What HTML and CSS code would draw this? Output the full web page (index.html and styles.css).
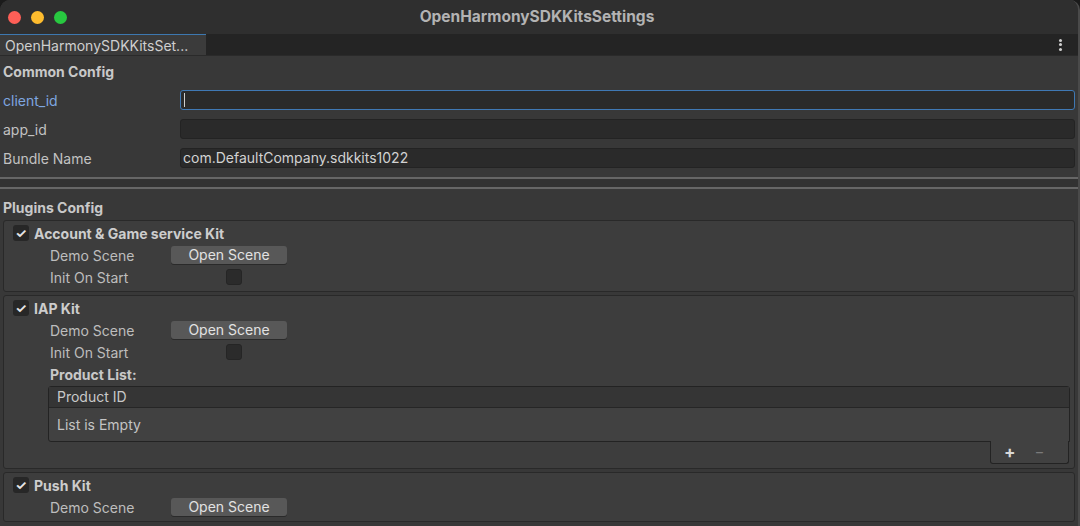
FILE: index.html
```html
<!DOCTYPE html>
<html>
<head>
<meta charset="utf-8">
<link rel="stylesheet" href="styles.css">
</head>
<body>
<div class="window">
  <div class="titlebar">
    <div class="lights">
      <span class="light red"></span>
      <span class="light yellow"></span>
      <span class="light green"></span>
    </div>
    <div class="title">OpenHarmonySDKKitsSettings</div>
  </div>
  <div class="tabbar">
    <div class="tab">OpenHarmonySDKKitsSet...</div>
    <div class="kebab"><span></span><span></span><span></span></div>
  </div>
  <div class="content">
    <div class="section-title">Common Config</div>
    <div class="fields">
      <div class="field-row">
        <div class="label focus">client_id</div>
        <div class="input focused"><span class="caret"></span></div>
      </div>
      <div class="field-row">
        <div class="label">app_id</div>
        <div class="input"></div>
      </div>
      <div class="field-row">
        <div class="label">Bundle Name</div>
        <div class="input">com.DefaultCompany.sdkkits1022</div>
      </div>
    </div>
    <div class="separator"></div>
    <div class="section-title plugins">Plugins Config</div>

    <div class="kit first">
      <div class="kit-head"><span class="check">&#10003;</span><span class="kit-name">Account &amp; Game service Kit</span></div>
      <div class="prop"><span class="prop-label">Demo Scene</span><span class="btn">Open Scene</span></div>
      <div class="prop"><span class="prop-label">Init On Start</span><span class="box-check"></span></div>
    </div>

    <div class="kit">
      <div class="kit-head"><span class="check">&#10003;</span><span class="kit-name">IAP Kit</span></div>
      <div class="prop"><span class="prop-label">Demo Scene</span><span class="btn">Open Scene</span></div>
      <div class="prop"><span class="prop-label">Init On Start</span><span class="box-check"></span></div>
      <div class="prop"><span class="prop-label bold">Product List:</span></div>
      <div class="list">
        <div class="list-head">Product ID</div>
        <div class="list-body">List is Empty</div>
      </div>
      <div class="list-foot"><span class="plus">+</span><span class="minus">&#8722;</span></div>
    </div>

    <div class="kit">
      <div class="kit-head"><span class="check">&#10003;</span><span class="kit-name">Push Kit</span></div>
      <div class="prop"><span class="prop-label">Demo Scene</span><span class="btn">Open Scene</span></div>
    </div>
  </div>
</div>
</body>
</html>
```

FILE: styles.css
```css
* { box-sizing: border-box; }
html, body {
  margin: 0;
  padding: 0;
  width: 1080px;
  height: 526px;
  overflow: hidden;
  background: #1b1b1b;
  font-family: Inter, "Noto Sans", "Liberation Sans", sans-serif;
  font-size: 14px;
  color: #c4c4c4;
}
.window {
  width: 1080px;
  height: 526px;
  background: #383838;
  border-radius: 10px 10px 0 0;
  overflow: hidden;
  display: flex;
  flex-direction: column;
  border-right: 2px solid #4a4a4a;
}
.titlebar {
  height: 34px;
  flex: none;
  background: #2f2f2f;
  display: flex;
  align-items: center;
  position: relative;
}
.lights {
  display: flex;
  gap: 10px;
  padding-left: 8px;
}
.light {
  width: 13px;
  height: 13px;
  border-radius: 50%;
  display: block;
}
.red { background: #fe5f57; }
.yellow { background: #febc2e; }
.green { background: #28c840; }
.title {
  position: absolute;
  left: 0;
  right: 0;
  top: 0;
  height: 34px;
  line-height: 33px;
  text-align: center;
  font-weight: 700;
  font-size: 15.5px;
  color: #b3b3b3;
  pointer-events: none;
  padding-right: 4px;
}
.tabbar {
  height: 22px;
  flex: none;
  background: #242424;
  display: flex;
  align-items: stretch;
  justify-content: space-between;
  border-bottom: 1px solid #2a2a2a;
}
.tab {
  width: 206px;
  background: #3b3b3b;
  border-top: 1px solid #3d78b0;
  padding-left: 5px;
  line-height: 21px;
  color: #cfcfcf;
  font-size: 14px;
  white-space: nowrap;
}
.kebab {
  width: 20px;
  display: flex;
  flex-direction: column;
  align-items: center;
  justify-content: center;
  gap: 1.5px;
  margin-right: 8px;
}
.kebab span {
  width: 3px;
  height: 3px;
  border-radius: 50%;
  background: #d0d0d0;
  display: block;
}
.content {
  flex: 1;
  padding: 5px 3px 0 3px;
  display: flex;
  flex-direction: column;
}
.section-title {
  font-weight: 700;
  height: 22px;
  line-height: 22px;
  color: #c8c8c8;
}
.fields {
  display: flex;
  flex-direction: column;
  gap: 9px;
  padding-top: 7px;
}
.field-row {
  display: flex;
  align-items: center;
  height: 20px;
}
.label {
  width: 177px;
  flex: none;
  color: #c2c2c2;
}
.label.focus { color: #7ea6e0; }
.input {
  flex: 1;
  height: 20px;
  background: #2a2a2a;
  border: 1px solid #232323;
  border-radius: 3px;
  line-height: 18px;
  padding-left: 2px;
  color: #d2d2d2;
}
.input.focused {
  border-color: #3f78b4;
  display: flex;
  align-items: center;
}
.caret {
  width: 1px;
  height: 14px;
  background: #cfcfcf;
  margin-left: 1px;
}
.separator {
  margin: 9px -3px 0 -3px;
  height: 12px;
  border-top: 2px solid #666;
  border-bottom: 2px solid #666;
  background: #323232;
}
.plugins {
  margin-top: 8px;
}
.kit {
  margin-top: 3px;
  border: 1px solid #292929;
  border-radius: 3px;
  background: #3d3d3d;
  padding: 1px 0 3px 0;
}
.kit.first { margin-top: 1px; }
.kit-head {
  height: 22px;
  display: flex;
  align-items: center;
  padding-left: 9px;
}
.check {
  width: 16px;
  height: 16px;
  background: #272727;
  border-radius: 3px;
  color: #e6e6e6;
  font-size: 13px;
  line-height: 16px;
  text-align: center;
  font-weight: 700;
  flex: none;
}
.kit-name {
  font-weight: 700;
  margin-left: 5px;
  color: #cdcdcd;
}
.prop {
  height: 22px;
  display: flex;
  align-items: center;
  padding-left: 46px;
}
.prop-label {
  width: 121px;
  flex: none;
  color: #bdbdbd;
}
.prop-label.bold {
  font-weight: 700;
  color: #c8c8c8;
}
.btn {
  width: 116px;
  height: 18px;
  background: #585858;
  border-radius: 3px;
  text-align: center;
  line-height: 18px;
  color: #e2e2e2;
  box-shadow: 0 1px 0 #2a2a2a;
}
.box-check {
  width: 16px;
  height: 16px;
  background: #2b2b2b;
  border: 1px solid #252525;
  border-radius: 3px;
  margin-left: 55px;
}
.list {
  margin: 1px 4px 0 44px;
  border: 1px solid #232323;
  border-radius: 3px 3px 0 3px;
  background: #414141;
}
.list-head {
  height: 21px;
  line-height: 20px;
  background: #353535;
  border-bottom: 1px solid #262626;
  padding-left: 8px;
  color: #c9c9c9;
}
.list-body {
  height: 33px;
  line-height: 33px;
  padding-left: 8px;
  color: #c4c4c4;
}
.list-foot {
  margin: -1px 5px 1px auto;
  width: 79px;
  height: 23px;
  border: 1px solid #232323;
  border-top: none;
  background: #414141;
  border-radius: 0 0 3px 3px;
  display: flex;
  align-items: center;
  justify-content: flex-start;
  padding-left: 13px;
  gap: 19px;
  position: relative;
  z-index: 1;
}
.plus {
  font-size: 17px;
  font-weight: 700;
  color: #d8d8d8;
  line-height: 20px;
}
.minus {
  font-size: 15px;
  color: #7a7a7a;
  line-height: 20px;
}
```
